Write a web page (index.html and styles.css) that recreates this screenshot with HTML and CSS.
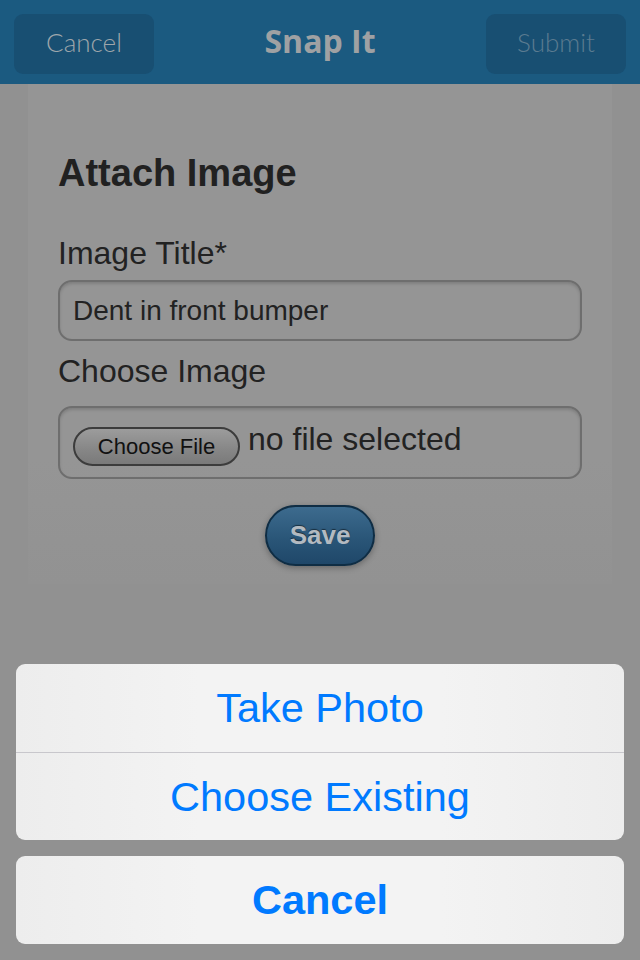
FILE: index.html
```html
<!DOCTYPE html>
<html lang="en">

<head>
    <meta charset="UTF-8">
    <meta name="viewport" content="width=device-width, initial-scale=1.0">
    <title>Snap It</title>
    <link rel="stylesheet" href="styles.css">
</head>

<body>

    <header class="top-bar">
        <button type="button" class="bar-btn">Cancel</button>
        <h1 class="bar-title">Snap It</h1>
        <button type="button" class="bar-btn bar-btn-disabled">Submit</button>
    </header>

    <main class="page">
        <div class="panel">
            <h2>Attach Image</h2>

            <label for="imageTitle">Image Title*</label>
            <div class="field">Dent in front bumper</div>

            <label for="imageFile">Choose Image</label>
            <div class="field file-field">
                <span class="file-btn">Choose File</span>
                <span class="file-name">no file selected</span>
            </div>

            <div class="save-row">
                <button type="button" class="save-btn">Save</button>
            </div>
        </div>
    </main>

    <!-- Action sheet shown over the dimmed page -->
    <div class="action-sheet">
        <div class="sheet-group">
            <div class="sheet-item">Take Photo</div>
            <div class="sheet-item">Choose Existing</div>
        </div>
        <div class="sheet-group">
            <div class="sheet-item sheet-cancel">Cancel</div>
        </div>
    </div>

</body>

</html>
```

FILE: styles.css
```css
/* Basic styling */
body {
    margin: 0;
    height: 960px;
    overflow: hidden;
    background: #919191;
    font-family: "Liberation Sans", Arial, sans-serif;
    color: #222;
    position: relative;
}

/* Header bar */
.top-bar {
    height: 84px;
    background: #1b5a80;
    display: flex;
    align-items: center;
    justify-content: space-between;
    padding: 4px 14px 0 14px;
    box-sizing: border-box;
}

.bar-btn {
    width: 140px;
    height: 60px;
    border: none;
    border-radius: 9px;
    background: #184f72;
    color: #9ea6ab;
    font-family: Lato, "Open Sans", sans-serif;
    font-weight: 300;
    font-size: 26px;
    padding: 0 0 5px 0;
}

.bar-btn-disabled {
    color: #5b7b90;
}

.bar-title {
    margin: 0 0 8px 0;
    font-family: "Open Sans", Lato, sans-serif;
    font-weight: 700;
    font-size: 32px;
    color: #9fa1a3;
}

/* Form panel */
.page {
    padding: 0 28px;
}

.panel {
    background: linear-gradient(#959595 75%, #929292);
    padding: 68px 30px 40px 30px;
    height: 500px;
    box-sizing: border-box;
}

.panel h2 {
    margin: 0 0 40px 0;
    font-size: 38px;
    font-weight: bold;
    color: #212121;
}

label {
    display: block;
    font-size: 32px;
    color: #222;
    margin-bottom: 8px;
}

.field {
    height: 61px;
    border: 2px solid #6e6e6e;
    border-radius: 14px;
    box-shadow: inset 0 2px 3px rgba(0, 0, 0, 0.15);
    box-sizing: border-box;
    padding: 0 13px;
    display: flex;
    align-items: center;
    font-size: 28px;
    color: #222;
    margin-bottom: 12px;
}

.file-field {
    height: 73px;
    align-items: flex-start;
    padding-top: 18px;
    gap: 8px;
    margin-top: 16px;
    margin-bottom: 26px;
}

.file-btn {
    height: 39px;
    width: 167px;
    box-sizing: border-box;
    border: 2px solid #3c3c3c;
    border-radius: 20px;
    background: linear-gradient(#9c9c9c, #868686 60%, #7a7a7a);
    font-size: 22px;
    color: #111;
    display: flex;
    align-items: center;
    justify-content: center;
    margin-top: 1px;
}

.file-name {
    font-size: 32px;
    color: #222;
    line-height: 30px;
    margin-top: -2px;
}

.save-row {
    display: flex;
    justify-content: center;
}

.save-btn {
    width: 110px;
    height: 61px;
    border: 2px solid #0f2d44;
    border-radius: 31px;
    background: linear-gradient(#3d6b8e, #2a5678 55%, #1f4769);
    color: #b3bac1;
    font-family: "Liberation Sans", Arial, sans-serif;
    font-weight: bold;
    font-size: 26px;
    text-shadow: 0 -1px 1px rgba(0, 0, 0, 0.5);
    box-shadow: 0 2px 6px rgba(0, 0, 0, 0.3);
    padding: 0;
}

/* Action sheet */
.action-sheet {
    position: absolute;
    left: 16px;
    right: 16px;
    bottom: 16px;
    display: flex;
    flex-direction: column;
    gap: 16px;
}

.sheet-group {
    background: linear-gradient(90deg, #ededed, #f3f3f3 30%, #f3f3f3 70%, #ededed);
    border-radius: 9px;
    overflow: hidden;
}

.sheet-item {
    height: 88px;
    display: flex;
    align-items: center;
    justify-content: center;
    font-size: 41.5px;
    color: #007aff;
}

.sheet-item + .sheet-item {
    border-top: 1px solid #c8c7cc;
    height: 87px;
}

.sheet-cancel {
    font-weight: bold;
}
```
